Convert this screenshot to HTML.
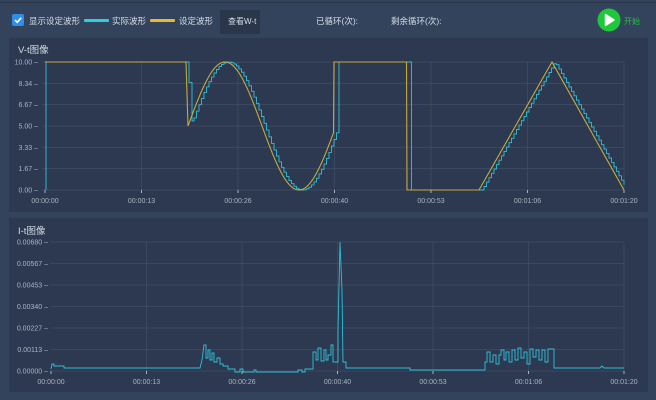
<!DOCTYPE html><html><head><meta charset="utf-8"><style>
body{margin:0;width:656px;height:400px;background:#34435c;font-family:"Liberation Sans","Noto Sans CJK SC",sans-serif;overflow:hidden;position:relative}
.t{position:absolute;color:#d6dde8;font-size:8.5px;white-space:nowrap}
.panel{position:absolute;left:9px;width:639px;background:#2c3950}
</style></head><body>
<div style="position:absolute;left:0;top:2px;width:656px;height:1px;background:#2a3548"></div>
<div style="position:absolute;left:12px;top:14px;width:12px;height:12px;background:#2f8fe8;border-radius:2px"></div>
<svg style="position:absolute;left:12px;top:14px" width="12" height="12"><path d="M3 6 L5.2 8.3 L9.2 3.8" stroke="#fff" stroke-width="1.6" fill="none"/></svg>
<div class="t" style="left:29px;top:15px">显示设定波形</div>
<div style="position:absolute;left:84px;top:19px;width:25px;height:3px;background:#2ad0e0;border-radius:1px"></div>
<div class="t" style="left:112px;top:15px">实际波形</div>
<div style="position:absolute;left:150px;top:19px;width:25px;height:3px;background:#e8b830;border-radius:1px"></div>
<div class="t" style="left:179px;top:15px">设定波形</div>
<div style="position:absolute;left:220px;top:10px;width:40px;height:24px;background:#2a3649;border-radius:2px"></div>
<div class="t" style="left:228px;top:16px;font-size:8px">查看W-t</div>
<div class="t" style="left:316px;top:15px">已循环(次):</div>
<div class="t" style="left:391px;top:15px">剩余循环(次):</div>
<svg style="position:absolute;left:597px;top:8px" width="26" height="26"><circle cx="12" cy="12" r="11.5" fill="#1fc83a"/><path d="M8.5 6.5 L17 12 L8.5 17.5 Z" fill="#fff" stroke="#fff" stroke-width="1.5" stroke-linejoin="round"/></svg>
<div class="t" style="left:624px;top:16px;color:#1fc83a;font-size:8px">开始</div>

<div class="panel" style="top:38px;height:174px"></div>
<div class="panel" style="top:218px;height:174px"></div>
<div class="t" style="left:18px;top:42px;font-size:9.5px">V-t图像</div>
<div class="t" style="left:18px;top:223px;font-size:9.5px">I-t图像</div>
<svg id="s" style="position:absolute;left:0;top:0" width="656" height="400"></svg>
<script>
var s=document.getElementById('s'),h='';
function T(x,y,t,a){h+='<text x="'+x+'" y="'+y+'" fill="#aab3c2" font-size="7" text-anchor="'+(a||'middle')+'" font-family="Liberation Sans">'+t+'</text>';}
var yl=['10.00','8.34','6.67','5.00','3.33','1.67','0.00'];
for(var i=0;i<7;i++){var y=62+i*128/6;h+='<line x1="42" y1="'+y+'" x2="624" y2="'+y+'" stroke="#3f4d66" stroke-width="0.8"/>';T(38,y+2.5,yl[i]+' –','end');}
var xl=['00:00:00','00:00:13','00:00:26','00:00:40','00:00:53','00:01:06','00:01:20'];
for(var i=0;i<7;i++){var x=45+i*96.5;if(i>0)h+='<line x1="'+x+'" y1="62" x2="'+x+'" y2="190" stroke="#3f4d66" stroke-width="0.8"/>';h+='<line x1="'+x+'" y1="190" x2="'+x+'" y2="193" stroke="#aab3c2"/>';T(x,203,xl[i]);}
function Y(v){return 190-v*12.8;}
function f(x){if(x<187)return 10;if(x<334)return 5+5*Math.sin(2*Math.PI*(x-188)/148);if(x<407)return 10;if(x<479)return 0;if(x<552)return (x-479)/73*10;return Math.max(0,10-(x-552)/72*10);}
var c='M46 '+Y(0)+' L46 '+Y(10)+' L189 '+Y(10)+' L189 '+Y(8.4)+' L192 '+Y(8.4)+' L192 '+Y(5.4);var last=5.4;
for(var x=194;x<=624;x+=2.5){var v=f(x-3);if(x>=337&&x<410)v=10;if(x>=410&&x<482)v=0;c+=' L'+x+' '+Y(last).toFixed(1)+' L'+x+' '+Y(v).toFixed(1);last=v;}
h+='<path d="'+c+'" stroke="#2fc0d8" stroke-width="0.9" fill="none"/>';
var p='M45 '+Y(10);for(var x=186;x<=624;x+=0.5){var v=f(x);if(x>186&&x<188)v=5+(188-x)*2.5;p+=' L'+x+' '+Y(v).toFixed(1);}
h+='<path d="'+p+'" stroke="#c8aa3c" stroke-width="1.1" fill="none"/>';
var il=['0.00680','0.00567','0.00453','0.00340','0.00227','0.00113','0.00000'];
for(var i=0;i<7;i++){var y=242+i*129/6;h+='<line x1="50" y1="'+y+'" x2="624" y2="'+y+'" stroke="#3f4d66" stroke-width="0.8"/>';T(48,y+2.5,il[i]+' –','end');}
for(var i=0;i<7;i++){var x=51+i*95.5;if(i>0)h+='<line x1="'+x+'" y1="242" x2="'+x+'" y2="371" stroke="#3f4d66" stroke-width="0.8"/>';h+='<line x1="'+x+'" y1="371" x2="'+x+'" y2="374" stroke="#aab3c2"/>';T(x,384,xl[i]);}
var pts=[[51,369],[52,364],[54,364],[54,366],[64,366],[64,368],[200,368],[202,360],[204,345],[206,345],[206,358],[208,358],[208,350],[210,350],[210,360],[212,360],[212,353],[214,353],[214,362],[217,362],[217,358],[220,358],[220,364],[223,364],[223,366],[228,366],[228,369],[235,369],[235,372],[240,372],[240,369],[243,369],[243,372],[254,372],[254,370],[256,370],[256,372],[298,372],[298,370],[302,370],[302,372],[305,372],[305,369],[313,369],[313,352],[316,352],[316,360],[318,360],[318,348],[321,348],[321,361],[324,361],[324,350],[326,350],[326,360],[328,360],[328,355],[331,355],[331,345],[333,345],[333,362],[338,362],[338,330],[340,242],[342,290],[343,362],[346,362],[346,368],[410,368],[410,370],[485,370],[485,362],[487,362],[487,352],[490,352],[490,362],[493,362],[493,355],[496,355],[496,364],[499,364],[499,355],[501,355],[501,350],[504,350],[504,360],[506,360],[506,352],[509,352],[509,362],[512,362],[512,350],[515,350],[515,360],[518,360],[518,348],[521,348],[521,358],[524,358],[524,352],[527,352],[527,364],[530,364],[530,349],[533,349],[533,357],[536,357],[536,350],[539,350],[539,360],[542,360],[542,350],[545,350],[545,362],[548,362],[548,349],[554,349],[554,368],[600,368],[602,366],[604,368],[624,368]];
h+='<path d="M'+pts.map(function(q){return q.join(' ')}).join(' L')+'" stroke="#2fc0d8" stroke-width="0.9" fill="none"/>';
s.innerHTML=h;
</script>
</body></html>
